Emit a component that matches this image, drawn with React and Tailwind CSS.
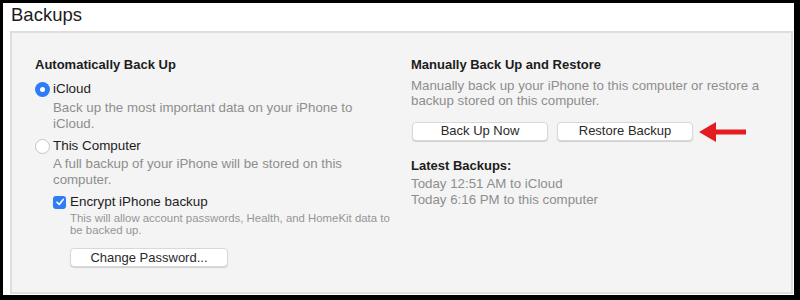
import React from "react";

const font = { fontFamily: '"Liberation Sans", Arial, sans-serif' };

function Button({ children, className = "" }) {
  return (
    <div
      className={
        "flex items-center justify-center h-[19px] bg-white rounded-[4px] border border-[#d8d8d8] shadow-[0_1px_1px_rgba(0,0,0,0.15)] text-[13px] text-[#2a2a2a] " +
        className
      }
    >
      {children}
    </div>
  );
}

export default function App() {
  return (
    <div className="w-[800px] h-[300px] bg-black pt-[3px] pl-[3px] pr-[6px] pb-[5px]" style={font}>
      <div className="w-full h-full bg-white flex flex-col pl-[7px] pr-[1px] pb-[1px]">
        <div className="h-[28px] text-[18.5px] leading-[28px] text-[#1c1c1c] -mt-[2px] pl-[1px]">Backups</div>
        <div className="flex-1 mt-[2px] bg-[#f4f4f4] border-2 border-[#dedede] flex pl-[23px] pt-[24px]">
          <div className="w-[376px] flex flex-col">
            <div className="text-[13px] font-bold text-[#1c1c1c] leading-[16px]">Automatically Back Up</div>
            <div className="flex items-center mt-[8px] h-[17px]">
              <div className="w-[15px] h-[15px] rounded-full bg-[#2f7cf6] flex items-center justify-center">
                <div className="w-[5px] h-[5px] rounded-full bg-white" />
              </div>
              <span className="ml-[3px] text-[13.4px] text-[#1c1c1c]">iCloud</span>
            </div>
            <div className="ml-[18px] text-[13.3px] leading-[16px] text-[#8e8e8e] mt-[2px]">
              Back up the most important data on your iPhone to
              <br />
              iCloud.
            </div>
            <div className="flex items-center mt-[6px] h-[17px]">
              <div className="w-[15px] h-[15px] rounded-full bg-white border border-[#c4c4c4]" />
              <span className="ml-[3px] text-[13.4px] text-[#1c1c1c]">This Computer</span>
            </div>
            <div className="ml-[18px] text-[13.3px] leading-[15.5px] text-[#8e8e8e] mt-[1px]">
              A full backup of your iPhone will be stored on this
              <br />
              computer.
            </div>
            <div className="ml-[18px] flex items-center mt-[7px] h-[16px]">
              <div className="w-[13px] h-[13px] rounded-[3px] bg-[#2f7cf6] flex items-center justify-center">
                <svg width="10" height="10" viewBox="0 0 10 10">
                  <path d="M2 5.2 L4.2 7.4 L8.2 2.4" stroke="white" strokeWidth="1.6" fill="none" strokeLinecap="round" strokeLinejoin="round" />
                </svg>
              </div>
              <span className="ml-[4px] text-[13.4px] text-[#1c1c1c]">Encrypt iPhone backup</span>
            </div>
            <div className="ml-[35px] text-[11.4px] leading-[12px] text-[#959595] mt-[2px]">
              This will allow account passwords, Health, and HomeKit data to
              <br />
              be backed up.
            </div>
            <Button className="ml-[35px] mt-[12px] w-[158px]">Change Password...</Button>
          </div>
          <div className="flex flex-col">
            <div className="text-[13px] font-bold text-[#1c1c1c] leading-[16px]">Manually Back Up and Restore</div>
            <div className="text-[13.3px] leading-[15px] text-[#8e8e8e] mt-[5px]">
              Manually back up your iPhone to this computer or restore a
              <br />
              backup stored on this computer.
            </div>
            <div className="flex items-center mt-[11px] gap-[9px]">
              <Button className="w-[136px] ml-[1px]">Back Up Now</Button>
              <Button className="w-[136px]">Restore Backup</Button>
              <svg width="48" height="22" viewBox="0 0 48 22" className="ml-[-3px] mt-[2px]">
                <path d="M0 11 L17 1 L17 8.5 L47 8.5 L47 13.5 L17 13.5 L17 21 Z" fill="#e41c22" />
              </svg>
            </div>
            <div className="text-[13px] font-bold text-[#1c1c1c] leading-[16px] mt-[15px]">Latest Backups:</div>
            <div className="text-[13.3px] leading-[16px] text-[#8e8e8e] mt-[2px]">
              Today 12:51 AM to iCloud
              <br />
              Today 6:16 PM to this computer
            </div>
          </div>
        </div>
      </div>
    </div>
  );
}
